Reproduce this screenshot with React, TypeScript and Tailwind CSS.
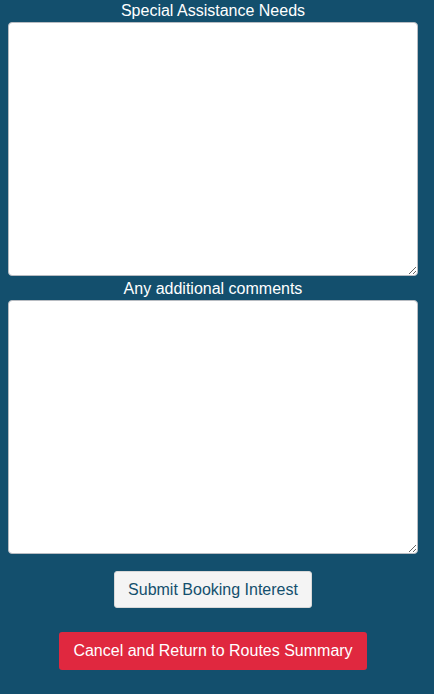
export default function App() {
  return (
    <div
      className="min-h-[694px] w-full bg-[#134f6d] text-white"
      style={{ fontFamily: '"Liberation Sans", Arial, sans-serif' }}
    >
      <div className="ml-2 flex w-[410px] flex-col items-center">
        <label className="mt-[1px] text-center text-base leading-[20px]">Special Assistance Needs</label>
        <textarea className="mt-[1px] h-[254px] w-full rounded-[4px] border border-[#b8bcc2] bg-white text-black" />
        <label className="mt-[3px] text-center text-base leading-[20px]">Any additional comments</label>
        <textarea className="mt-[1px] h-[254px] w-full rounded-[4px] border border-[#b8bcc2] bg-white text-black" />
        <button className="mt-[17px] h-[37px] rounded-[3px] border border-[#d8d8d8] bg-[#f4f4f4] px-[13px] text-base text-[#134f6d]">
          Submit Booking Interest
        </button>
        <button className="mt-[24px] h-[38px] rounded-[3px] bg-[#e0283f] px-[14px] text-base text-white">
          Cancel and Return to Routes Summary
        </button>
      </div>
    </div>
  );
}
